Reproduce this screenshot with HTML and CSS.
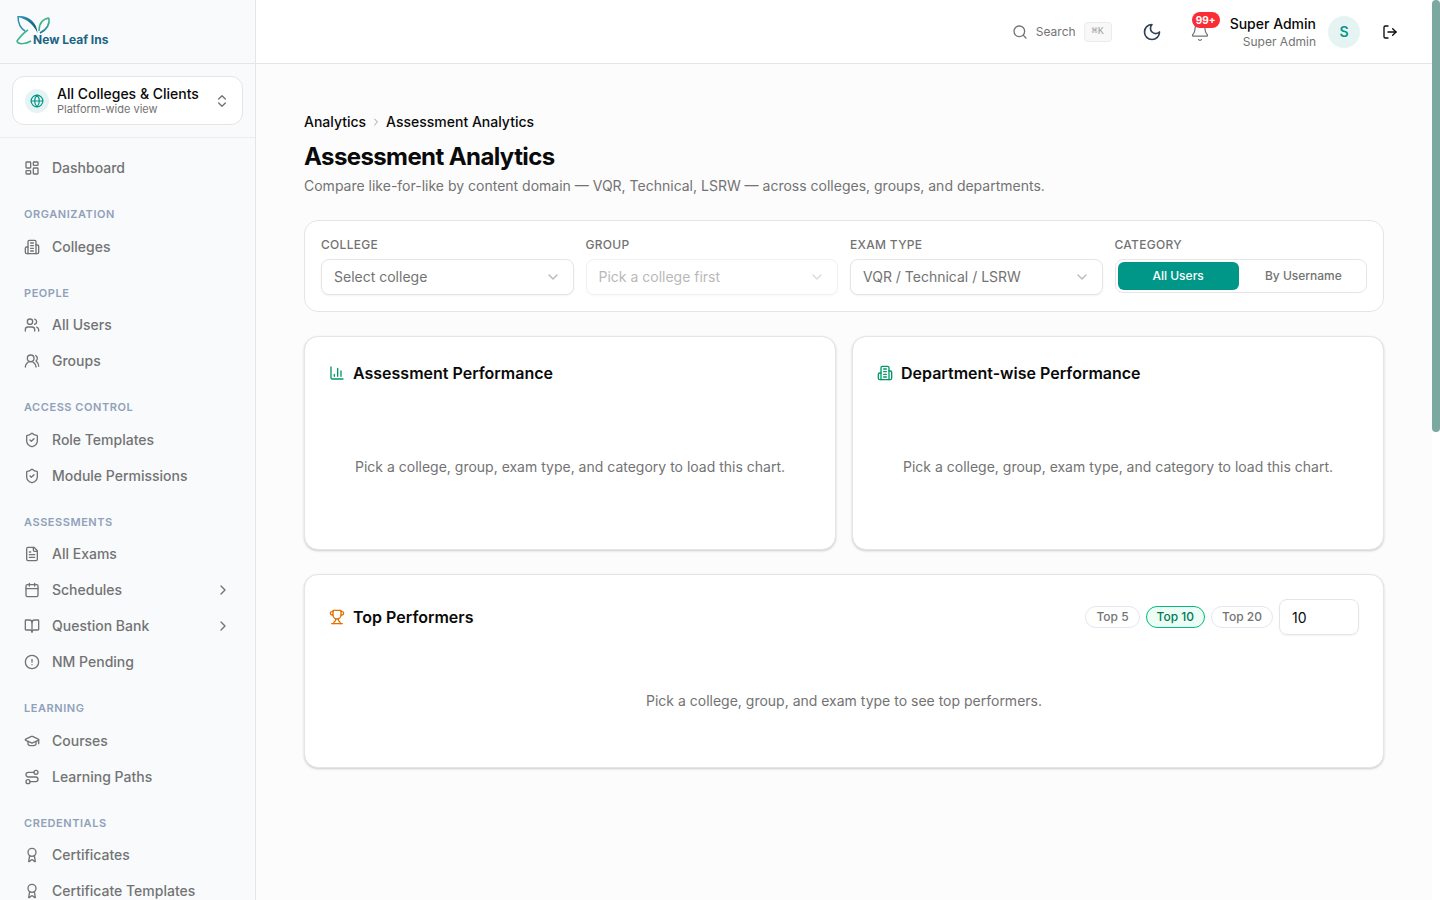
FILE: index.html
```html
<!DOCTYPE html>
<html lang="en">
<head>
  <meta charset="UTF-8">
  <meta name="viewport" content="width=device-width, initial-scale=1.0">
  <title>Assessment Analytics</title>
  <link rel="stylesheet" href="styles.css">
</head>
<body>
  <!-- icon sprite -->
  <svg class="sprite" aria-hidden="true">
    <symbol id="i-dashboard" viewBox="0 0 24 24"><rect x="3" y="3" width="7" height="9" rx="1"/><rect x="14" y="3" width="7" height="5" rx="1"/><rect x="14" y="12" width="7" height="9" rx="1"/><rect x="3" y="16" width="7" height="5" rx="1"/></symbol>
    <symbol id="i-building" viewBox="0 0 24 24"><path d="M6 22V4a2 2 0 0 1 2-2h8a2 2 0 0 1 2 2v18Z"/><path d="M6 12H4a2 2 0 0 0-2 2v6a2 2 0 0 0 2 2h2"/><path d="M18 9h2a2 2 0 0 1 2 2v9a2 2 0 0 1-2 2h-2"/><path d="M10 6h4M10 10h4M10 14h4M10 18h4"/></symbol>
    <symbol id="i-users" viewBox="0 0 24 24"><path d="M16 21v-2a4 4 0 0 0-4-4H6a4 4 0 0 0-4 4v2"/><circle cx="9" cy="7" r="4"/><path d="M22 21v-2a4 4 0 0 0-3-3.87"/><path d="M16 3.13a4 4 0 0 1 0 7.75"/></symbol>
    <symbol id="i-groups" viewBox="0 0 24 24"><path d="M18 21a8 8 0 0 0-16 0"/><circle cx="10" cy="8" r="5"/><path d="M22 20c0-3.37-2-6.5-4-8a5 5 0 0 0-.45-8.3"/></symbol>
    <symbol id="i-shield" viewBox="0 0 24 24"><path d="M20 13c0 5-3.5 7.5-7.66 8.95a1 1 0 0 1-.67-.01C7.5 20.5 4 18 4 13V6a1 1 0 0 1 1-1c2 0 4.5-1.2 6.24-2.72a1.17 1.17 0 0 1 1.52 0C14.51 3.81 17 5 19 5a1 1 0 0 1 1 1z"/><path d="m9 12 2 2 4-4"/></symbol>
    <symbol id="i-file" viewBox="0 0 24 24"><path d="M15 2H6a2 2 0 0 0-2 2v16a2 2 0 0 0 2 2h12a2 2 0 0 0 2-2V7Z"/><path d="M14 2v4a2 2 0 0 0 2 2h4"/><path d="M10 9H8M16 13H8M16 17H8"/></symbol>
    <symbol id="i-calendar" viewBox="0 0 24 24"><path d="M8 2v4M16 2v4"/><rect x="3" y="4" width="18" height="18" rx="2"/><path d="M3 10h18"/></symbol>
    <symbol id="i-book" viewBox="0 0 24 24"><path d="M12 7v14"/><path d="M3 18a1 1 0 0 1-1-1V4a1 1 0 0 1 1-1h5a4 4 0 0 1 4 4 4 4 0 0 1 4-4h5a1 1 0 0 1 1 1v13a1 1 0 0 1-1 1h-6a3 3 0 0 0-3 3 3 3 0 0 0-3-3z"/></symbol>
    <symbol id="i-alert" viewBox="0 0 24 24"><circle cx="12" cy="12" r="10"/><path d="M12 8v4M12 16h.01"/></symbol>
    <symbol id="i-cap" viewBox="0 0 24 24"><path d="M21.42 10.92a1 1 0 0 0-.02-1.84L12.83 5.18a2 2 0 0 0-1.66 0l-8.57 3.9a1 1 0 0 0 0 1.83l8.57 3.91a2 2 0 0 0 1.66 0z"/><path d="M22 10v6"/><path d="M6 12.5V16a6 3 0 0 0 12 0v-3.5"/></symbol>
    <symbol id="i-route" viewBox="0 0 24 24"><circle cx="6" cy="19" r="3"/><path d="M9 19h8.5a3.5 3.5 0 0 0 0-7h-11a3.5 3.5 0 0 1 0-7H15"/><circle cx="18" cy="5" r="3"/></symbol>
    <symbol id="i-award" viewBox="0 0 24 24"><path d="m15.48 12.89 1.51 8.53a.5.5 0 0 1-.81.47l-3.58-2.69a1 1 0 0 0-1.2 0l-3.58 2.69a.5.5 0 0 1-.81-.47l1.51-8.53"/><circle cx="12" cy="8" r="6"/></symbol>
    <symbol id="i-right" viewBox="0 0 24 24"><path d="m9 18 6-6-6-6"/></symbol>
    <symbol id="i-down" viewBox="0 0 24 24"><path d="m6 9 6 6 6-6"/></symbol>
    <symbol id="i-updown" viewBox="0 0 24 24"><path d="m7 15 5 5 5-5"/><path d="m7 9 5-5 5 5"/></symbol>
    <symbol id="i-globe" viewBox="0 0 24 24"><circle cx="12" cy="12" r="10"/><path d="M12 2a14.5 14.5 0 0 0 0 20 14.5 14.5 0 0 0 0-20"/><path d="M2 12h20"/></symbol>
    <symbol id="i-search" viewBox="0 0 24 24"><circle cx="11" cy="11" r="8"/><path d="m21 21-4.3-4.3"/></symbol>
    <symbol id="i-moon" viewBox="0 0 24 24"><path d="M12 3a6 6 0 0 0 9 9 9 9 0 1 1-9-9Z"/></symbol>
    <symbol id="i-bell" viewBox="0 0 24 24"><path d="M10.27 21a2 2 0 0 0 3.46 0"/><path d="M3.26 15.33A1 1 0 0 0 4 17h16a1 1 0 0 0 .74-1.67C19.41 13.96 18 12.5 18 8A6 6 0 0 0 6 8c0 4.5-1.41 5.96-2.74 7.33"/></symbol>
    <symbol id="i-logout" viewBox="0 0 24 24"><path d="M9 21H5a2 2 0 0 1-2-2V5a2 2 0 0 1 2-2h4"/><path d="m16 17 5-5-5-5"/><path d="M21 12H9"/></symbol>
    <symbol id="i-chart" viewBox="0 0 24 24"><path d="M3 3v16a2 2 0 0 0 2 2h16"/><path d="M8 17v-3M13 17V5M18 17V9"/></symbol>
    <symbol id="i-trophy" viewBox="0 0 24 24"><path d="M6 9H4.5a2.5 2.5 0 0 1 0-5H6"/><path d="M18 9h1.5a2.5 2.5 0 0 0 0-5H18"/><path d="M4 22h16"/><path d="M10 14.66V17c0 .55-.47.98-.97 1.21C7.85 18.75 7 20.24 7 22"/><path d="M14 14.66V17c0 .55.47.98.97 1.21C16.15 18.75 17 20.24 17 22"/><path d="M18 2H6v7a6 6 0 0 0 12 0V2Z"/></symbol>
  </svg>

  <aside class="sidebar">
    <div class="brand">
      <a href="#" aria-label="New Leaf Ins">
        <svg class="logo" width="96" height="32" viewBox="0 0 96 32">
          <defs>
            <linearGradient id="leaf-a" x1="0" y1="0" x2="1" y2="1">
              <stop offset="0" stop-color="#2f9bb5"/>
              <stop offset="1" stop-color="#0c4a6e"/>
            </linearGradient>
            <linearGradient id="leaf-b" x1="0" y1="1" x2="1" y2="0">
              <stop offset="0" stop-color="#1f6fa8"/>
              <stop offset="1" stop-color="#3fb488"/>
            </linearGradient>
          </defs>
          <path d="M2 0C12 -1 21 6 21.500 17C18 9 11 3 2 1Z" fill="url(#leaf-a)"/>
          <path d="M2 0C2 7 4 12 9 15" fill="none" stroke="#2f8fb5" stroke-width="1.500"/>
          <path d="M23 15C23 8 26 3 33 2" fill="none" stroke="#3fb488" stroke-width="1.500"/>
          <path d="M33 2C34 9 30 14 24 17" fill="none" stroke="url(#leaf-b)" stroke-width="1.600"/>
          <path d="M12 14C7 17 4 21 1 25C2 29 10 28 15 25" fill="none" stroke="#3fb488" stroke-width="1.500"/>
          <text x="17" y="28" class="logo-text">New Leaf Ins</text>
        </svg>
      </a>
    </div>

    <div class="scope">
      <button class="scope-btn" type="button">
        <span class="scope-icon"><svg class="icon"><use href="#i-globe"/></svg></span>
        <span class="scope-text">
          <span class="scope-title">All Colleges &amp; Clients</span>
          <span class="scope-sub">Platform-wide view</span>
        </span>
        <svg class="icon"><use href="#i-updown"/></svg>
      </button>
    </div>

    <nav class="nav">
      <a href="#" class="nav-item"><svg class="icon"><use href="#i-dashboard"/></svg><span>Dashboard</span></a>

      <h2 class="nav-label">Organization</h2>
      <a href="#" class="nav-item"><svg class="icon"><use href="#i-building"/></svg><span>Colleges</span></a>

      <h2 class="nav-label">People</h2>
      <a href="#" class="nav-item"><svg class="icon"><use href="#i-users"/></svg><span>All Users</span></a>
      <a href="#" class="nav-item"><svg class="icon"><use href="#i-groups"/></svg><span>Groups</span></a>

      <h2 class="nav-label">Access Control</h2>
      <a href="#" class="nav-item"><svg class="icon"><use href="#i-shield"/></svg><span>Role Templates</span></a>
      <a href="#" class="nav-item"><svg class="icon"><use href="#i-shield"/></svg><span>Module Permissions</span></a>

      <h2 class="nav-label">Assessments</h2>
      <a href="#" class="nav-item"><svg class="icon"><use href="#i-file"/></svg><span>All Exams</span></a>
      <button type="button" class="nav-item"><svg class="icon"><use href="#i-calendar"/></svg><span>Schedules</span><svg class="icon nav-arrow"><use href="#i-right"/></svg></button>
      <button type="button" class="nav-item"><svg class="icon"><use href="#i-book"/></svg><span>Question Bank</span><svg class="icon nav-arrow"><use href="#i-right"/></svg></button>
      <a href="#" class="nav-item"><svg class="icon"><use href="#i-alert"/></svg><span>NM Pending</span></a>

      <h2 class="nav-label">Learning</h2>
      <a href="#" class="nav-item"><svg class="icon"><use href="#i-cap"/></svg><span>Courses</span></a>
      <a href="#" class="nav-item"><svg class="icon"><use href="#i-route"/></svg><span>Learning Paths</span></a>

      <h2 class="nav-label">Credentials</h2>
      <a href="#" class="nav-item"><svg class="icon"><use href="#i-award"/></svg><span>Certificates</span></a>
      <a href="#" class="nav-item"><svg class="icon"><use href="#i-award"/></svg><span>Certificate Templates</span></a>
    </nav>
  </aside>

  <div class="page">
    <header class="topbar">
      <button type="button" class="search-btn">
        <svg class="icon"><use href="#i-search"/></svg>
        <span>Search</span>
        <kbd>⌘K</kbd>
      </button>
      <button type="button" class="icon-btn theme-btn" aria-label="Toggle theme"><svg class="icon icon-lg"><use href="#i-moon"/></svg></button>
      <button type="button" class="icon-btn bell-btn" aria-label="Notifications">
        <svg class="icon icon-lg"><use href="#i-bell"/></svg>
        <span class="badge">99+</span>
      </button>
      <div class="user">
        <div class="user-text">
          <span class="user-name">Super Admin</span>
          <span class="user-role">Super Admin</span>
        </div>
        <span class="avatar">S</span>
      </div>
      <button type="button" class="icon-btn logout-btn" aria-label="Log out"><svg class="icon"><use href="#i-logout"/></svg></button>
    </header>

    <main class="content">
      <div class="page-head">
        <nav class="crumbs" aria-label="Breadcrumb">
          <a href="#">Analytics</a>
          <svg class="icon icon-sm"><use href="#i-right"/></svg>
          <a href="#">Assessment Analytics</a>
        </nav>
        <h1>Assessment Analytics</h1>
        <p>Compare like-for-like by content domain — VQR, Technical, LSRW — across colleges, groups, and departments.</p>
      </div>

      <section class="filters">
        <div class="field">
          <label for="college">College</label>
          <div class="select">
            <select id="college"><option>Select college</option></select>
            <svg class="icon"><use href="#i-down"/></svg>
          </div>
        </div>
        <div class="field">
          <label for="group">Group</label>
          <div class="select is-disabled">
            <select id="group" disabled><option>Pick a college first</option></select>
            <svg class="icon"><use href="#i-down"/></svg>
          </div>
        </div>
        <div class="field">
          <label for="exam-type">Exam type</label>
          <div class="select">
            <select id="exam-type"><option>VQR / Technical / LSRW</option></select>
            <svg class="icon"><use href="#i-down"/></svg>
          </div>
        </div>
        <div class="field">
          <span class="field-label" id="category-label">Category</span>
          <div class="segment" role="group" aria-labelledby="category-label">
            <button type="button" class="active" aria-pressed="true">All Users</button>
            <button type="button" aria-pressed="false">By Username</button>
          </div>
        </div>
      </section>

      <div class="charts">
        <section class="card">
          <h2 class="card-title"><svg class="icon green"><use href="#i-chart"/></svg>Assessment Performance</h2>
          <p class="empty">Pick a college, group, exam type, and category to load this chart.</p>
        </section>
        <section class="card">
          <h2 class="card-title"><svg class="icon green"><use href="#i-building"/></svg>Department-wise Performance</h2>
          <p class="empty">Pick a college, group, exam type, and category to load this chart.</p>
        </section>
      </div>

      <section class="card">
        <div class="card-head">
          <h2 class="card-title"><svg class="icon orange"><use href="#i-trophy"/></svg>Top Performers</h2>
          <div class="top-picker">
            <button type="button" class="pill">Top 5</button>
            <button type="button" class="pill active">Top 10</button>
            <button type="button" class="pill">Top 20</button>
            <input type="number" class="top-input" value="10" aria-label="Number of top performers">
          </div>
        </div>
        <p class="empty empty-short">Pick a college, group, and exam type to see top performers.</p>
      </section>
    </main>
  </div>

  <div class="scroll-track" aria-hidden="true"><div class="scroll-thumb"></div></div>
</body>
</html>
```
FILE: styles.css
```css
* {
  margin: 0;
  padding: 0;
  box-sizing: border-box;
}

body {
  display: flex;
  height: 100vh;
  overflow: hidden;
  font-family: 'Inter', sans-serif;
  font-size: 14px;
  line-height: 20px;
  color: #0a0a0a;
  background: #fcfcfc;
}

a {
  color: inherit;
  text-decoration: none;
}

button, input, select {
  font: inherit;
  color: inherit;
  background: none;
  border: none;
}

button {
  cursor: pointer;
}

.sprite {
  display: none;
}

.icon {
  width: 16px;
  height: 16px;
  flex-shrink: 0;
  fill: none;
  stroke: currentColor;
  stroke-width: 2;
  stroke-linecap: round;
  stroke-linejoin: round;
}

.icon-lg {
  width: 20px;
  height: 20px;
}

.icon-sm {
  width: 12px;
  height: 12px;
}

.green {
  color: #009966;
}

.orange {
  color: #e17100;
}

/* Sidebar */
.sidebar {
  display: flex;
  flex-direction: column;
  flex-shrink: 0;
  width: 256px;
  background: #f8fafc;
  border-right: 1px solid #e5e5e5;
}

.brand {
  display: flex;
  align-items: center;
  flex-shrink: 0;
  height: 64px;
  padding: 0 16px;
  border-bottom: 1px solid #e5e5e5;
}

.logo {
  display: block;
  overflow: visible;
}

.logo-text {
  font-size: 12px;
  font-weight: 700;
  fill: #1b6583;
}

.scope {
  padding: 12px;
  border-bottom: 1px solid #ececec;
}

.scope-btn {
  display: flex;
  align-items: center;
  gap: 8px;
  width: 100%;
  padding: 8px 12px;
  text-align: left;
  background: #fff;
  border: 1px solid #e5e5e5;
  border-radius: 12px;
  color: #737373;
}

.scope-icon {
  display: flex;
  align-items: center;
  justify-content: center;
  width: 24px;
  height: 24px;
  border-radius: 50%;
  background: #e5f4f3;
  color: #009688;
}

.scope-icon .icon {
  width: 14px;
  height: 14px;
}

.scope-text {
  display: flex;
  flex: 1;
  flex-direction: column;
}

.scope-title {
  font-weight: 500;
  line-height: 18px;
  color: #0a0a0a;
}

.scope-sub {
  font-size: 11px;
  line-height: 13px;
}

.nav {
  flex: 1;
  min-height: 0;
  padding: 12px;
  overflow-y: auto;
  scrollbar-width: none;
}

.nav-item {
  display: flex;
  align-items: center;
  gap: 12px;
  width: 100%;
  height: 36px;
  padding: 0 12px;
  font-weight: 500;
  color: #737373;
}

.nav-arrow {
  margin-left: auto;
}

.nav-label {
  margin: 20px 12px 6px;
  font-size: 11px;
  font-weight: 600;
  line-height: 1.5;
  letter-spacing: 0.05em;
  text-transform: uppercase;
  color: #90a1b9;
}

/* Top bar */
.page {
  display: flex;
  flex: 1;
  flex-direction: column;
  min-width: 0;
}

.topbar {
  display: flex;
  align-items: center;
  justify-content: flex-end;
  flex-shrink: 0;
  height: 64px;
  padding: 0 24px;
  background: #fff;
  border-bottom: 1px solid #e5e5e5;
}

.search-btn {
  display: flex;
  align-items: center;
  gap: 8px;
  font-size: 12px;
  color: #737373;
}

.search-btn kbd {
  padding: 0 7px;
  font-family: 'Liberation Mono', monospace;
  font-size: 10px;
  line-height: 18px;
  color: #a1a1a1;
  background: #f8f8f8;
  border: 1px solid #ebebeb;
  border-radius: 4px;
}

.icon-btn {
  display: flex;
  align-items: center;
  justify-content: center;
  width: 36px;
  height: 36px;
}

.theme-btn {
  margin-left: 22px;
  color: #314158;
}

.bell-btn {
  position: relative;
  margin-left: 12px;
  color: #737373;
}

.bell-btn .icon {
  stroke-width: 1.5;
}

.badge {
  position: absolute;
  top: -2px;
  right: -2px;
  height: 16px;
  padding: 0 4px;
  font-size: 10px;
  font-weight: 700;
  line-height: 16px;
  color: #fff;
  background: #fb2c36;
  border-radius: 8px;
}

.user {
  display: flex;
  align-items: center;
  gap: 12px;
  margin-left: 12px;
}

.user-text {
  display: flex;
  flex-direction: column;
  text-align: right;
}

.user-name {
  font-weight: 500;
}

.user-role {
  font-size: 12px;
  line-height: 16px;
  color: #737373;
}

.avatar {
  width: 32px;
  height: 32px;
  font-weight: 600;
  line-height: 32px;
  text-align: center;
  color: #009688;
  background: #e5f4f3;
  border-radius: 50%;
}

.logout-btn {
  margin-left: 12px;
}

/* Content */
.content {
  display: flex;
  flex: 1;
  flex-direction: column;
  gap: 24px;
  padding: 48px;
}

.crumbs {
  display: flex;
  align-items: center;
  gap: 4px;
  font-weight: 500;
}

.crumbs .icon {
  color: #a1a1a1;
}

.page-head h1 {
  margin: 9px 0 3px;
  font-size: 24px;
  font-weight: 700;
  line-height: 32px;
  letter-spacing: -0.025em;
}

.page-head p {
  color: #737373;
}

.filters {
  display: grid;
  grid-template-columns: repeat(4, 1fr);
  gap: 12px;
  padding: 16px;
  background: #fff;
  border: 1px solid #e5e5e5;
  border-radius: 14px;
}

.field {
  display: flex;
  flex-direction: column;
  gap: 6px;
}

.field label, .field-label {
  font-size: 12px;
  font-weight: 500;
  line-height: 16px;
  letter-spacing: 0.025em;
  text-transform: uppercase;
  color: #737373;
}

.select {
  display: grid;
  align-items: center;
  color: #737373;
}

.select select, .select .icon {
  grid-area: 1 / 1;
}

.select select {
  width: 100%;
  height: 36px;
  padding: 0 36px 0 12px;
  appearance: none;
  background: #fff;
  border: 1px solid #e5e5e5;
  border-radius: 8px;
  box-shadow: 0 1px 2px rgba(0, 0, 0, 0.05);
  opacity: 1;
}

.select .icon {
  justify-self: end;
  margin-right: 13px;
  opacity: 0.5;
  pointer-events: none;
}

.is-disabled {
  opacity: 0.5;
}

.segment {
  display: grid;
  grid-template-columns: 1fr 1fr;
  gap: 4px;
  padding: 2px;
  background: #fff;
  border: 1px solid #e5e5e5;
  border-radius: 8px;
}

.segment button {
  height: 28px;
  font-size: 12px;
  font-weight: 500;
  color: #737373;
  border-radius: 6px;
}

.segment .active {
  color: #fff;
  background: #009688;
}

.charts {
  display: grid;
  grid-template-columns: 1fr 1fr;
  gap: 16px;
}

.card {
  padding: 24px;
  background: #fff;
  border: 1px solid #e5e5e5;
  border-radius: 14px;
  box-shadow: 0 1px 3px rgba(0, 0, 0, 0.1), 0 1px 2px rgba(0, 0, 0, 0.1);
}

.card-head {
  display: flex;
  align-items: center;
  justify-content: space-between;
}

.card-title {
  display: flex;
  align-items: center;
  gap: 8px;
  font-size: 16px;
  font-weight: 600;
  line-height: 24px;
}

.empty {
  margin-top: 24px;
  padding: 48px 0;
  text-align: center;
  color: #737373;
}

.empty-short {
  padding: 32px 0;
}

.top-picker {
  display: flex;
  align-items: center;
  gap: 6px;
}

.pill {
  padding: 2px 10px;
  font-size: 12px;
  font-weight: 500;
  line-height: 16px;
  color: #737373;
  border: 1px solid #e2e8f0;
  border-radius: 11px;
}

.pill.active {
  color: #007a55;
  background: #ecfdf5;
  border-color: #00bc7d;
}

.top-input {
  width: 80px;
  height: 36px;
  padding: 0 12px;
  appearance: textfield;
  border: 1px solid #e5e5e5;
  border-radius: 8px;
  box-shadow: 0 1px 2px rgba(0, 0, 0, 0.05);
}

/* Page scroll indicator */
.scroll-track {
  flex-shrink: 0;
  width: 8px;
  background: #fff;
}

.scroll-thumb {
  height: 48%;
  background: #7ba8a1;
  border-radius: 4px;
}
```
